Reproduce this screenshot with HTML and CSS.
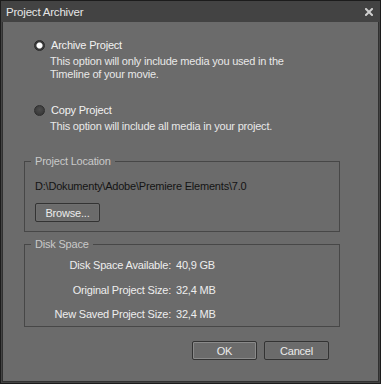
FILE: index.html
```html
<!DOCTYPE html>
<html>
<head>
<meta charset="utf-8">
<link rel="stylesheet" href="styles.css">
</head>
<body>
<div class="window">
  <div class="titlebar">
    <span class="title">Project Archiver</span>
    <svg class="close" width="8" height="8" viewBox="0 0 8 8"><path d="M1 1L7 7M7 1L1 7" stroke="#cfcfcf" stroke-width="2" stroke-linecap="square"/></svg>
  </div>
  <div class="content">
    <div class="option">
      <div class="opt-head"><span class="radio checked"></span><span class="opt-label">Archive Project</span></div>
      <div class="opt-desc">This option will only include media you used in the<br>Timeline of your movie.</div>
    </div>
    <div class="option second">
      <div class="opt-head"><span class="radio"></span><span class="opt-label">Copy Project</span></div>
      <div class="opt-desc">This option will include all media in your project.</div>
    </div>
    <fieldset class="group loc">
      <legend>Project Location</legend>
      <div class="path">D:\Dokumenty\Adobe\Premiere Elements\7.0</div>
      <button class="btn browse">Browse...</button>
    </fieldset>
    <fieldset class="group disk">
      <legend>Disk Space</legend>
      <div class="stats">
        <span class="k">Disk Space Available:</span><span class="v">40,9 GB</span>
        <span class="k">Original Project Size:</span><span class="v">32,4 MB</span>
        <span class="k">New Saved Project Size:</span><span class="v">32,4 MB</span>
      </div>
    </fieldset>
    <div class="actions">
      <button class="btn default">OK</button>
      <button class="btn">Cancel</button>
    </div>
  </div>
</div>
</body>
</html>
```
FILE: styles.css
```css
html, body {
  margin: 0;
  padding: 0;
  background: #1e1e1e;
}
body {
  font-family: "Liberation Sans", Arial, sans-serif;
  font-size: 11px;
  line-height: 13px;
  letter-spacing: -0.2px;
}
.window {
  width: 381px;
  height: 384px;
  box-sizing: border-box;
  border: 1px solid #1c1c1c;
  background: #434343;
  padding: 0 1px 1px 1px;
  display: flex;
  flex-direction: column;
}
.titlebar {
  height: 21px;
  flex: none;
  display: flex;
  align-items: center;
  justify-content: space-between;
  padding: 0 6px 0 4px;
}
.title {
  color: #e6e6e6;
  font-size: 11.5px;
  letter-spacing: -0.2px;
  margin-top: 1px;
}
.close {
  display: block;
  margin-top: 0px;
}
.content {
  flex: 1;
  background: #6b6b6b;
  border: 1px solid #303030;
  border-top: none;
  padding: 17px 37px 0 21px;
  color: #eeeeee;
}
.option {
  margin-left: 10px;
}
.option.second {
  margin-top: 23px;
}
.opt-head {
  display: flex;
  align-items: center;
  height: 13px;
}
.radio {
  width: 11px;
  height: 11px;
  box-sizing: border-box;
  border-radius: 50%;
  border: 1px solid #2e2e2e;
  background: radial-gradient(circle at 50% 40%, #4d4d4d 0%, #3a3a3a 70%);
  flex: none;
  margin-top: -1px;
}
.radio.checked {
  background: radial-gradient(circle, #ffffff 0 2.3px, #c8c8c8 2.8px, #3a3a3a 3.6px);
  border-color: #2a2a2a;
}
.opt-label {
  margin-left: 6px;
  color: #f2f2f2;
}
.opt-desc {
  margin-top: 3px;
  margin-left: 16px;
  color: #e8e8e8;
}
.group {
  margin: 0;
  border: 1px solid #474747;
  padding: 0 10px;
  min-width: 0;
}
.group legend {
  padding: 0 4px;
  margin-left: -4px;
  color: #c9c9c9;
  line-height: 13px;
}
.loc {
  margin-top: 22px;
  width: 316px;
  box-sizing: border-box;
  padding-bottom: 9px;
}
.path {
  margin-top: 12px;
  color: #141414;
}
.btn {
  font-family: inherit;
  font-size: 11px;
  letter-spacing: -0.2px;
  height: 19px;
  width: 65px;
  box-sizing: border-box;
  background: #6b6b6b;
  border: 1px solid #333333;
  border-radius: 2px;
  color: #ececec;
  padding: 0;
  line-height: 16px;
  box-shadow: inset 0 0 0 1px #6f6f6f;
}
.browse {
  display: block;
  margin-top: 10px;
}
.btn.default {
  box-shadow: inset 0 0 0 1px #8a8a8a;
}
.disk {
  margin-top: 6px;
  width: 316px;
  box-sizing: border-box;
  padding-bottom: 5px;
}
.stats {
  display: grid;
  grid-template-columns: 136px auto;
  column-gap: 5px;
  row-gap: 11.5px;
  margin-top: 8px;
  color: #eeeeee;
}
.stats .k {
  text-align: right;
}
.actions {
  display: flex;
  justify-content: flex-end;
  gap: 7px;
  margin-top: 14px;
  padding-right: 12px;
}
```
